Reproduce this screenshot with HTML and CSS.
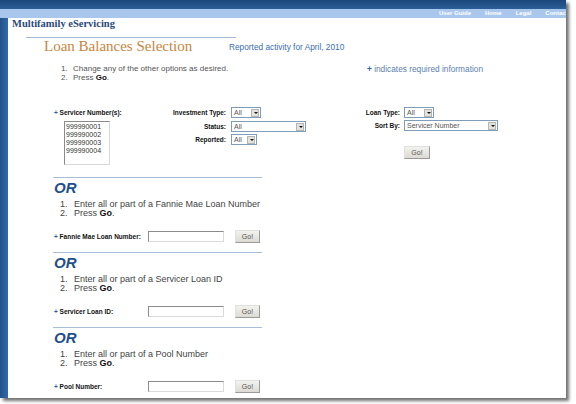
FILE: index.html
```html
<!DOCTYPE html>
<html>
<head>
<meta charset="utf-8">
<link rel="stylesheet" href="styles.css">
</head>
<body>
<div class="page">
  <div class="topbar"></div>
  <div class="navbar">
    <a>User Guide</a><a>Home</a><a>Legal</a><a>Contact Us</a>
  </div>
  <div class="body">
    <div class="sidebar"></div>
    <div class="main">
      <div class="brand">Multifamily eServicing</div>
      <div class="rule"></div>
      <div class="titlerow">
        <h1 class="title">Loan Balances Selection</h1>
        <span class="reported">Reported activity for April, 2010</span>
      </div>
      <div class="introrow">
        <div class="steps top">
          <div class="step"><span class="num">1.</span><span>Change any of the other options as desired.</span></div>
          <div class="step"><span class="num">2.</span><span>Press <b>Go</b>.</span></div>
        </div>
        <div class="required"><span class="plus">+</span> indicates required information</div>
      </div>

      <div class="form">
        <div class="col1">
          <div class="lbl"><span class="plus">+</span> Servicer Number(s):</div>
          <div class="listbox">
            <div>999990001</div><div>999990002</div><div>999990003</div><div>999990004</div>
          </div>
        </div>
        <div class="grid grid2">
          <div class="glbl">Investment Type:</div>
          <div class="sel w30"><span>All</span><i class="btn"></i></div>
          <div class="glbl">Status:</div>
          <div class="sel w75"><span>All</span><i class="btn"></i></div>
          <div class="glbl">Reported:</div>
          <div class="sel w26"><span>All</span><i class="btn"></i></div>
        </div>
        <div class="grid grid3">
          <div class="glbl">Loan Type:</div>
          <div class="sel w30"><span>All</span><i class="btn"></i></div>
          <div class="glbl">Sort By:</div>
          <div class="sel w94"><span>Servicer Number</span><i class="btn"></i></div>
          <div class="glbl"></div>
          <div class="gocell"><div class="go">Go!</div></div>
        </div>
      </div>

      <div class="section">
        <div class="or">OR</div>
        <div class="steps">
          <div class="step"><span class="num">1.</span><span>Enter all or part of a Fannie Mae Loan Number</span></div>
          <div class="step"><span class="num">2.</span><span>Press <b>Go</b>.</span></div>
        </div>
        <div class="field">
          <div class="flbl"><span class="plus">+</span> Fannie Mae Loan Number:</div>
          <div class="input"></div>
          <div class="go">Go!</div>
        </div>
      </div>

      <div class="section">
        <div class="or">OR</div>
        <div class="steps">
          <div class="step"><span class="num">1.</span><span>Enter all or part of a Servicer Loan ID</span></div>
          <div class="step"><span class="num">2.</span><span>Press <b>Go</b>.</span></div>
        </div>
        <div class="field">
          <div class="flbl"><span class="plus">+</span> Servicer Loan ID:</div>
          <div class="input"></div>
          <div class="go">Go!</div>
        </div>
      </div>

      <div class="section">
        <div class="or">OR</div>
        <div class="steps">
          <div class="step"><span class="num">1.</span><span>Enter all or part of a Pool Number</span></div>
          <div class="step"><span class="num">2.</span><span>Press <b>Go</b>.</span></div>
        </div>
        <div class="field">
          <div class="flbl"><span class="plus">+</span> Pool Number:</div>
          <div class="input"></div>
          <div class="go">Go!</div>
        </div>
      </div>
    </div>
  </div>
</div>
</body>
</html>
```

FILE: styles.css
```css
* { box-sizing: border-box; }
html, body { margin: 0; padding: 0; background: #fff; }
body { width: 576px; height: 404px; overflow: hidden; font-family: "Liberation Sans", Arial, sans-serif; }

.page {
  width: 566px;
  height: 398px;
  overflow: hidden;
  background: #fff;
  box-shadow: 3px 3px 3px rgba(0,0,0,0.55);
  display: flex;
  flex-direction: column;
}

.topbar {
  height: 9px;
  background: linear-gradient(#1b477c, #2c5e97);
  flex: none;
}
.navbar {
  height: 9px;
  flex: none;
  background: #a9c7ed;
  display: flex;
  align-items: center;
  padding-left: 439px;
  gap: 14px;
  white-space: nowrap;
  overflow: hidden;
}
.navbar a {
  color: #fff;
  font-size: 6px;
  font-weight: bold;
  line-height: 9px;
}

.body { flex: 1; display: flex; }
.sidebar { width: 8px; flex: none; background: linear-gradient(90deg, #23528a, #336aa6); }
.main { flex: 1; }

.brand {
  padding-left: 4px;
  height: 12px;
  line-height: 12px;
  font-family: "Liberation Serif", "Times New Roman", serif;
  font-size: 10.5px;
  font-weight: bold;
  color: #2c4a78;
}
.rule {
  margin: 7px 0 0 18px;
  width: 210px;
  border-top: 1px solid #a4bbd6;
}
.titlerow {
  display: flex;
  align-items: center;
  height: 16px;
  margin-left: 36px;
}
.title {
  margin: 0;
  width: 185px;
  font-family: "Liberation Serif", "Times New Roman", serif;
  font-weight: normal;
  font-size: 15px;
  color: #c98540;
  line-height: 16px;
  white-space: nowrap;
}
.reported {
  font-size: 8.3px;
  color: #3b6db2;
  padding-top: 1px;
}

.introrow {
  display: flex;
  margin-top: 10px;
  margin-left: 53px;
}
.introrow .steps { width: 306px; font-size: 8px; color: #555; }
.required {
  font-size: 8.3px;
  color: #5b7fad;
  line-height: 9px;
  padding-top: 1px;
}
.plus { color: #2d5f9a; font-weight: bold; }

.steps { font-size: 9px; color: #444; line-height: 9px; }
.step { display: flex; }
.step .num { width: 12px; }
.step b { color: #111; }
.section .steps { margin-left: 7px; }
.section .step .num { width: 14px; }

.form {
  display: flex;
  margin-top: 25px;
  margin-left: 46px;
  height: 70px;
}
.col1 { width: 106px; padding-top: 2px; }
.lbl, .glbl, .flbl {
  font-size: 6.5px;
  font-weight: bold;
  color: #111;
  white-space: nowrap;
}
.lbl { line-height: 8px; }
.listbox {
  margin: 4px 0 0 10px;
  width: 46px;
  height: 44px;
  border: 1px solid #8a8a8a;
  border-right-color: #d8d8d8;
  border-bottom-color: #d8d8d8;
  padding: 1px 1px;
  font-size: 7px;
  line-height: 8px;
  color: #333;
}

.grid { display: grid; row-gap: 2px; align-items: center; align-content: start; }
.grid2 { grid-template-columns: 66px 74px; column-gap: 5px; width: 145px; }
.grid3 { grid-template-columns: 95px 94px; column-gap: 4px; }
.glbl { text-align: right; }
.grid2 > .sel:nth-child(4) { margin-top: 1px; }

.sel {
  height: 11px;
  border: 1px solid #7f9db9;
  background: #fff;
  display: flex;
  align-items: center;
  justify-content: space-between;
  font-size: 7px;
  color: #555;
  padding-left: 2px;
}
.sel span { line-height: 9px; }
.sel .btn {
  width: 8px;
  height: 8px;
  margin-right: 1px;
  background: #e4e2dc;
  border: 1px solid #b5b5b5;
  position: relative;
}
.sel .btn::after {
  content: "";
  position: absolute;
  left: 1.5px;
  top: 2px;
  border-left: 2px solid transparent;
  border-right: 2px solid transparent;
  border-top: 2px solid #111;
}
.w30 { width: 30px; }
.w75 { width: 75px; }
.w26 { width: 26px; }
.w94 { width: 94px; }

.gocell { padding-top: 13px; }
.go {
  width: 26px;
  height: 13px;
  border: 1px solid #9a9a9a;
  border-top-color: #e0e0e0;
  border-left-color: #e0e0e0;
  background: linear-gradient(#f2f2ee, #dcdad3);
  font-size: 7px;
  color: #555;
  text-align: center;
  line-height: 11px;
}

.section {
  margin-left: 45px;
  width: 209px;
  border-top: 1px solid #a8bdd8;
  height: 75px;
}
.or {
  margin-top: 3px;
  font-size: 15px;
  font-weight: bold;
  font-style: italic;
  color: #1f4f8d;
  line-height: 14px;
  padding-left: 1px;
}
.section .steps { margin-top: 5px; }
.field {
  display: flex;
  align-items: center;
  margin-top: 12px;
  height: 13px;
  white-space: nowrap;
}
.flbl { width: 95px; padding-left: 1px; }
.input {
  width: 76px;
  height: 11px;
  border: 1px solid #8c8c8c;
  border-right-color: #dadada;
  border-bottom-color: #dadada;
  background: #fff;
  margin-right: 11px;
}
.field .go { width: 25px; }
```
